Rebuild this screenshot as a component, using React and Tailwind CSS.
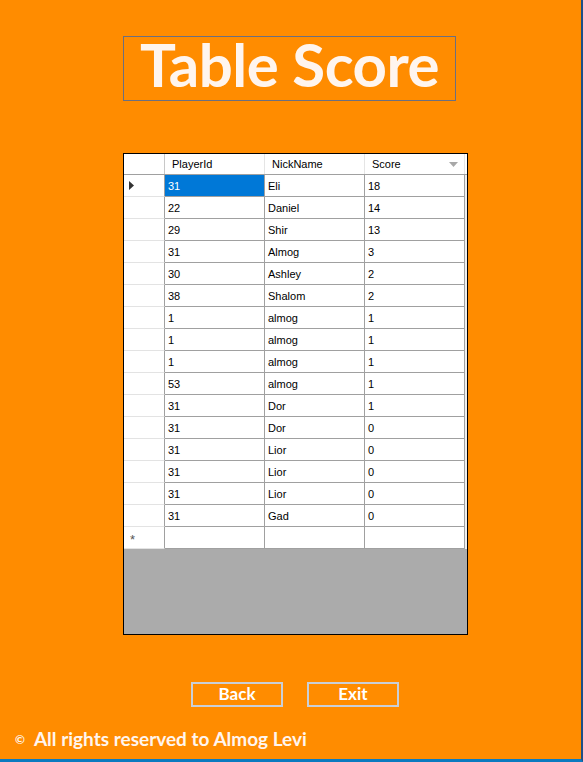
import React from 'react';

const rows = [
  ['31', 'Eli', '18'],
  ['22', 'Daniel', '14'],
  ['29', 'Shir', '13'],
  ['31', 'Almog', '3'],
  ['30', 'Ashley', '2'],
  ['38', 'Shalom', '2'],
  ['1', 'almog', '1'],
  ['1', 'almog', '1'],
  ['1', 'almog', '1'],
  ['53', 'almog', '1'],
  ['31', 'Dor', '1'],
  ['31', 'Dor', '0'],
  ['31', 'Lior', '0'],
  ['31', 'Lior', '0'],
  ['31', 'Lior', '0'],
  ['31', 'Gad', '0'],
];

const cell = 'w-[100px] h-full border-r border-b border-[#a0a0a0] flex items-center pl-[3px] pt-[1px]';

const App = () => {
  return (
    <div className="w-[583px] h-[762px] bg-[#ff8c00] border-r-2 border-r-[#1e4f86] border-b-[3px] border-b-[#0b7ac0] flex flex-col font-['Lato','Open_Sans',sans-serif]">
      <div className="ml-[123px] mt-[36px] w-[333px] h-[65px] border border-[#6b6f80] flex items-center justify-center">
        <h1 className="text-[60px] leading-none font-bold text-[#fff5ee] tracking-[-0.5px] pb-[9px]">Table Score</h1>
      </div>

      <div className="ml-[123px] mt-[52px] w-[345px] h-[482px] border border-black bg-[#ababab] flex flex-col font-['Liberation_Sans',Arial,sans-serif] text-[11px] text-black">
        <div className="h-[21px] flex bg-white border-b border-[#a0a0a0] shrink-0">
          <div className="w-[41px] h-full border-r border-[#c8c8c8]" />
          <div className="w-[100px] h-full border-r border-[#e5e5e5] flex items-center pl-[7px] pt-[1px]">PlayerId</div>
          <div className="w-[100px] h-full border-r border-[#e5e5e5] flex items-center pl-[7px] pt-[1px]">NickName</div>
          <div className="w-[100px] h-full border-r border-[#e5e5e5] flex items-center pl-[7px] justify-between pr-[6px] pt-[1px]">
            <span>Score</span>
            <svg width="9" height="5" viewBox="0 0 9 5"><path d="M0 0h9L4.5 5z" fill="#a8a8a8" /></svg>
          </div>
          <div className="flex-1" />
        </div>

        {rows.map((r, i) => (
          <div key={i} className="h-[22px] flex shrink-0">
            <div className="w-[41px] h-full bg-white border-r border-[#a0a0a0] border-b border-b-[#e3e3e3] flex items-center pl-[5px]">
              {i === 0 && (
                <svg width="5" height="9" viewBox="0 0 5 9"><path d="M0 0l5 4.5L0 9z" fill="#333" /></svg>
              )}
            </div>
            <div className={`${cell} ${i === 0 ? 'bg-[#0078d7] text-white' : 'bg-white'}`}>{r[0]}</div>
            <div className={`${cell} bg-white`}>{r[1]}</div>
            <div className={`${cell} bg-white`}>{r[2]}</div>
            <div className="flex-1 bg-[#f0f0f0]" />
          </div>
        ))}

        <div className="h-[22px] flex shrink-0">
          <div className="w-[41px] h-full bg-white border-r border-[#a0a0a0] border-b border-b-[#e3e3e3] flex items-center pl-[6px] text-[#555] text-[13px]">
            <span className="leading-none mt-[4px]">*</span>
          </div>
          <div className={`${cell} bg-white`} />
          <div className={`${cell} bg-white`} />
          <div className={`${cell} bg-white`} />
          <div className="flex-1 bg-[#f0f0f0]" />
        </div>
      </div>

      <div className="ml-[191px] mt-[47px] flex gap-[24px]">
        <button className="w-[92px] h-[25px] border-2 border-[#c9cfd8] text-white font-bold text-[17px] leading-none flex items-center justify-center pb-[3px]">
          Back
        </button>
        <button className="w-[92px] h-[25px] border-2 border-[#c9cfd8] text-white font-bold text-[17px] leading-none flex items-center justify-center pb-[3px]">
          Exit
        </button>
      </div>

      <div className="ml-[15px] mt-[21px] flex items-center gap-[9px] text-[#fff5ee] font-bold">
        <span className="text-[12px] mt-[3px]">©</span>
        <span className="text-[19px] leading-none">All rights reserved to Almog Levi</span>
      </div>
    </div>
  );
};

export default App;
